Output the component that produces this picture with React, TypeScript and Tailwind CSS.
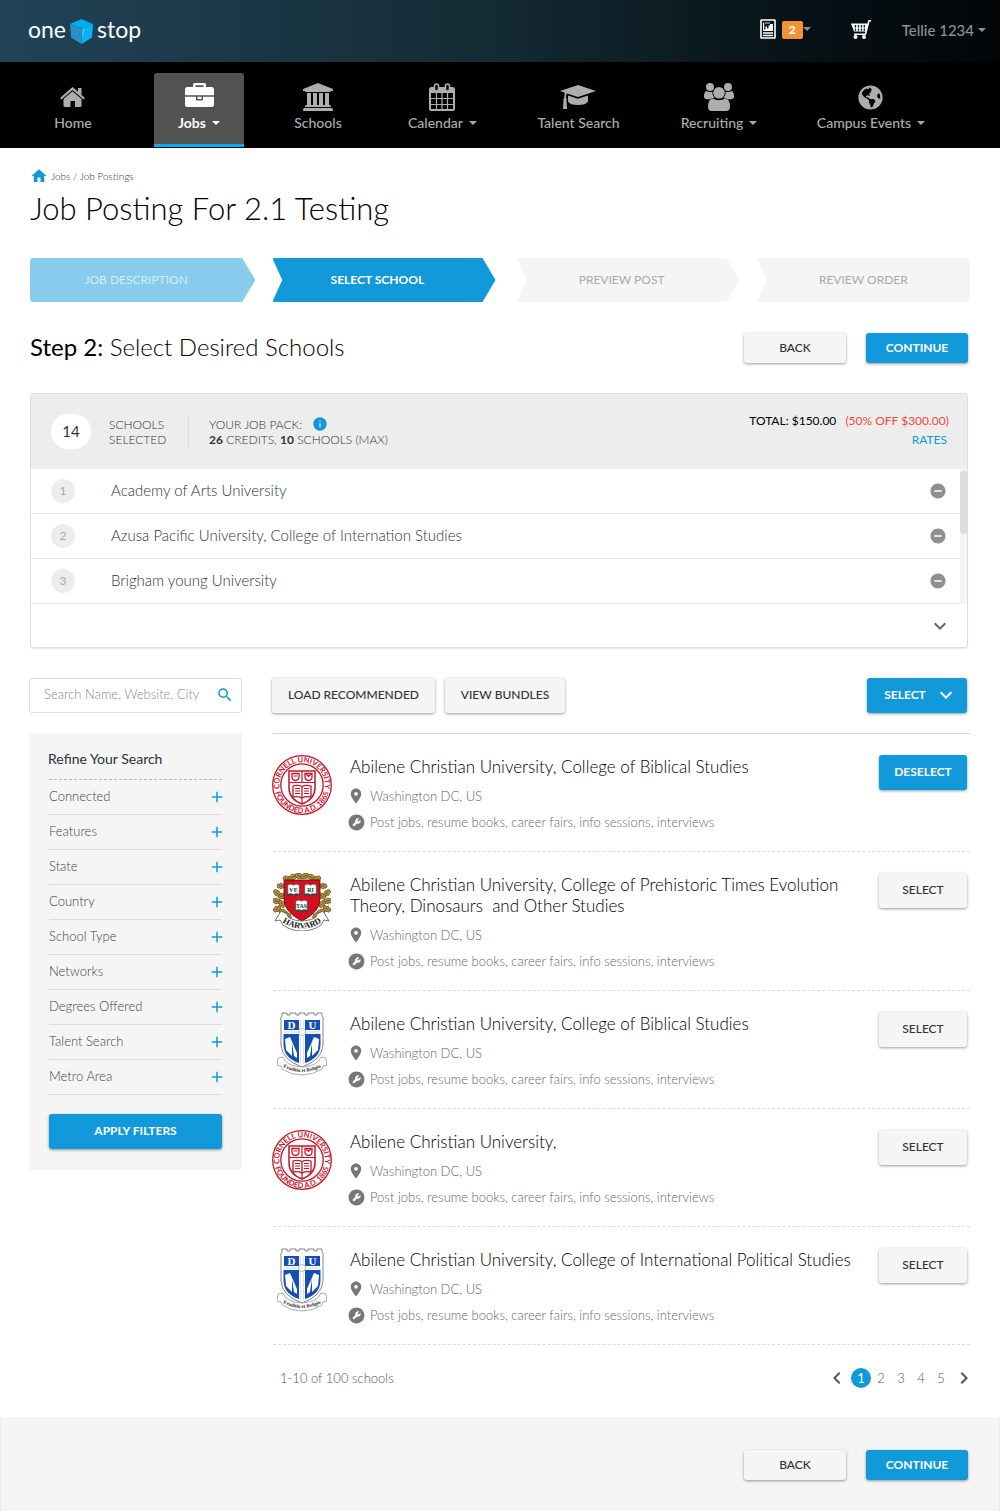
import { useId, type ReactNode } from "react";
import { FaGlobeAmericas } from "react-icons/fa";
import {
  MdAdd,
  MdBuildCircle,
  MdChevronLeft,
  MdChevronRight,
  MdExpandMore,
  MdHome,
  MdInfo,
  MdPlace,
  MdRemoveCircle,
  MdSearch,
} from "react-icons/md";

function Caret() {
  return <span aria-hidden="true" className="inline-block h-0 w-0 border-x-4 border-t-4 border-x-transparent border-t-current" />;
}

/* ---------- drawings ---------- */

function CubeLogo() {
  return (
    <svg viewBox="0 0 23 25" className="h-[25px] w-[23px]" aria-hidden="true">
      <path d="M11.5 0 23 5 11.5 10 0 5Z" fill="#00aeef" />
      <path d="M0 5 11.5 10V25L1 18.500Z" fill="#2d8fc9" />
      <path d="M23 5 11.500 10V25L22 18.500Z" fill="#06b4f5" />
      <path d="M12.500 10.500 15 9.500 12.500 18Z" fill="#4cc6f6" />
    </svg>
  );
}

function HouseIcon() {
  return (
    <svg viewBox="0 0 25 20" className="h-5 w-[25px]" fill="currentColor" aria-hidden="true">
      <path d="M12.500 0 18 4.800V1H21.500V8L25 11 23.600 12.500 12.500 3 1.400 12.500 0 11Z" />
      <path d="M12.500 4.300 21.500 12V18.500Q21.500 20 20 20H15V14H10.500V20H5Q3.500 20 3.500 18.500V12Z" />
    </svg>
  );
}

function BriefcaseIcon() {
  return (
    <svg viewBox="0 0 29 24" className="h-6 w-[29px]" fill="currentColor" aria-hidden="true">
      <path fillRule="evenodd" d="M8 4V1.800Q8 0 9.800 0H19.200Q21 0 21 1.800V4H26.500Q29 4 29 6.500V12.300H0V6.500Q0 4 2.500 4ZM10.500 4H18.500V2.200H10.500Z" />
      <path d="M0 13.700H11V16.200Q11 17.500 12.300 17.500H16.700Q18 17.500 18 16.200V13.700H29V21.500Q29 24 26.500 24H2.500Q0 24 0 21.500ZM12.500 13.700H16.500V16H12.500Z" />
    </svg>
  );
}

function BankIcon() {
  return (
    <svg viewBox="0 0 30 28" className="h-7 w-[30px]" fill="currentColor" aria-hidden="true">
      <path d="M15 0 30 6V8H28Q28 9 27 9H3Q2 9 2 8H0V6Z" />
      <path d="M4 10H8V22H10V10H14V22H16V10H20V22H22V10H26V22H27Q28 22 28 24H2Q2 22 3 22H4Z" />
      <path d="M1 25H29Q30 25 30 28H0Q0 25 1 25Z" />
    </svg>
  );
}

function CalendarIcon() {
  return (
    <svg viewBox="0 0 26 28" className="h-7 w-[26px]" aria-hidden="true">
      <rect x="1" y="5" width="24" height="22" rx="1.500" fill="none" stroke="currentColor" strokeWidth="2" />
      <path d="M1 5H25V10H1Z" fill="currentColor" />
      <path d="M7.500 10V27M13 10V27M18.500 10V27M1 15.500H25M1 21.500H25" stroke="currentColor" strokeWidth="1.200" />
      <rect x="5.500" y="1" width="4" height="7" rx="2" fill="#000" stroke="currentColor" strokeWidth="1.600" />
      <rect x="16.500" y="1" width="4" height="7" rx="2" fill="#000" stroke="currentColor" strokeWidth="1.600" />
    </svg>
  );
}

function CapIcon() {
  return (
    <svg viewBox="0 0 36 24" className="h-6 w-9" fill="currentColor" aria-hidden="true">
      <path d="M18 0 36 6 18 12 7 8.400Q6 9 6 13Q7.200 14 6.500 15.500L7 24H3L3.500 15.500Q3 14 4.200 13Q4.300 9 5 7.700L0 6Z" />
      <path d="M8 10.500 18 13.700 28 10.500V16.500Q26 20 18 20Q10 20 8 16.500Z" />
    </svg>
  );
}

function PeopleIcon() {
  return (
    <svg viewBox="0 0 30 28" className="h-7 w-[30px]" fill="currentColor" aria-hidden="true">
      <circle cx="6" cy="4" r="4" />
      <circle cx="24" cy="4" r="4" />
      <path d="M2.500 8Q4 9.200 6 9Q7.500 9 8.300 8.400Q8 12.500 10.500 14.800Q8 15 6.200 16.300H3Q0 16.300 0 13.500Q0 8.500 2.500 8Z" />
      <path d="M27.500 8Q26 9.200 24 9Q22.500 9 21.700 8.400Q22 12.500 19.500 14.800Q22 15 23.800 16.300H27Q30 16.300 30 13.500Q30 8.500 27.500 8Z" />
      <circle cx="15" cy="9.800" r="5.800" />
      <path d="M9 15.500Q11.500 17.300 15 17.300Q18.500 17.300 21 15.500Q26 16 26 23.500Q26 28 22 28H8Q4 28 4 23.500Q4 16 9 15.500Z" />
    </svg>
  );
}

function ReportIcon() {
  return (
    <svg viewBox="0 0 16 20" className="h-5 w-4" aria-hidden="true">
      <rect x="1" y="1" width="14" height="18" rx=".5" fill="none" stroke="#fff" strokeWidth="1.600" />
      <path d="M3 3.500H4.200V10.500H5.500V7.500H7V9.500H8.500V6.500H10V5H13V12H3Z" fill="#fff" />
      <path d="M5 4H10" stroke="#fff" strokeWidth=".8" />
      <path d="M3 14H13M3 16.500H13" stroke="#fff" strokeWidth="1.300" />
    </svg>
  );
}

function CartIcon() {
  return (
    <svg viewBox="0 0 20 19" className="h-[19px] w-5" fill="none" stroke="#fff" aria-hidden="true">
      <path d="M20 .8H18L14.500 14.300H3" strokeWidth="1.500" />
      <path d="M0 3.500H17L15 11.500H3Z" fill="#fff" stroke="none" />
      <path d="M4.500 5V11M7.500 5V11M10.500 5V11M13.300 5V11" stroke="#04141a" strokeWidth="1.300" strokeDasharray="2.400 1" />
      <circle cx="4.500" cy="17" r="2" fill="#fff" stroke="none" />
      <circle cx="13" cy="17" r="2" fill="#fff" stroke="none" />
    </svg>
  );
}

function CornellSeal() {
  const id = useId();
  return (
    <svg viewBox="0 0 60 60" className="h-[60px] w-[60px]" role="img" aria-label="Cornell University seal">
      <defs>
        <path id={id + "t"} d="M8 36A22.800 22.800 0 1 1 52 36" />
        <path id={id + "b"} d="M2 30A28 28 0 0 0 58 30" />
      </defs>
      <g fill="none" stroke="#c4162a">
        <circle cx="30" cy="30" r="29.300" strokeWidth="1.300" />
        <circle cx="30" cy="30" r="21.200" strokeWidth="1.300" />
        <path d="M17 16H43V33Q43 44 30 49Q17 44 17 33Z" strokeWidth="1.500" />
        <path d="M17 27.500H43M30 16V27.500M30 43V49" strokeWidth="1.200" />
        <path d="M20 18.500H27V22Q27 25 23.500 25.500Q20 25 20 22ZM33 18.500H40V22Q40 25 36.500 25.500Q33 25 33 22Z" strokeWidth="1.300" />
        <path d="M21.500 21H25.500M34 19L36.500 21.500 39 19" strokeWidth="1.200" />
        <path d="M30 31.500Q26 29.500 21 31V42Q26 41 30 43Q34 41 39 42V31Q34 29.500 30 31.500ZM30 31.500V43" strokeWidth="1.300" />
        <path d="M23 33.500H28M23 36H28M23 38.500H28M32 33.500H37M32 36H37M32 38.500H37" strokeWidth="1" />
      </g>
      <g fill="#c4162a" fontFamily="Lato, sans-serif" fontWeight="700" fontSize="7.500">
        <text textAnchor="middle"><textPath href={"#" + id + "t"} startOffset="50%">CORNELL UNIVERSITY</textPath></text>
        <text textAnchor="middle"><textPath href={"#" + id + "b"} startOffset="50%">FOUNDED A.D. 1865</textPath></text>
      </g>
    </svg>
  );
}

const LEAVES: [number, number, number][] = [
  [8, 13, 0], [4, 20, 40], [9, 23, -30], [3, 28, 10], [9, 31, 50], [4, 36, -30], [10, 39, 20], [15, 43, 50],
  [14, 6, 30], [20, 4, -20], [26, 3, 20], [32, 3, -20], [38, 4, 20], [44, 6, -30],
  [50, 13, 0], [54, 20, -40], [49, 23, 30], [55, 28, -10], [49, 31, -50], [54, 36, 30], [48, 39, -20], [43, 43, -50],
];

function OpenBook({ x, y, word }: { x: number; y: number; word: string }) {
  return (
    <g transform={`translate(${x} ${y})`}>
      <path d="M0 .5H13V11.500H0Z" fill="#2f4a35" />
      <path d="M.8 1Q4-.5 6.500 1.300Q9-.5 12.200 1V10Q9 8.800 6.500 10.300Q4 8.800 .8 10Z" fill="#fff" stroke="#555" strokeWidth=".5" />
      <text x="6.500" y="7.500" textAnchor="middle" fontSize="6" fontWeight="700" fontFamily="Liberation Serif, serif" fill="#333">{word}</text>
    </g>
  );
}

function HarvardSeal() {
  const id = useId();
  return (
    <svg viewBox="0 0 58 58" className="h-[58px] w-[58px]" role="img" aria-label="Harvard crest">
      <g>
        {LEAVES.map(([x, y, r]) => (
          <g key={x + "-" + y} transform={`translate(${x} ${y}) rotate(${r})`}>
            <path d="M-4 0Q-3.500-3 -1.500-2Q0-4 1.500-2Q3.500-3 4 0Q3.500 3 1.500 2Q0 4 -1.500 2Q-3.500 3 -4 0Z" fill="#b8943a" stroke="#4a3c18" strokeWidth=".6" />
            <path d="M-2 0H2" stroke="#4a3c18" strokeWidth=".7" />
          </g>
        ))}
      </g>
      <path d="M11 7H47V26Q47 39 29 48Q11 39 11 26Z" fill="#d2101f" stroke="#5c0a10" strokeWidth=".8" />
      <OpenBook x={14} y={11} word="VE" />
      <OpenBook x={31} y={11} word="RI" />
      <OpenBook x={22} y={27} word="TAS" />
      <path d="M8 38 14 41Q14 47 29 48Q44 47 44 41L50 38 56 48 51 47 48 52Q40 58 29 58Q18 58 10 52L7 47 2 48Z" fill="#fff" stroke="#555" strokeWidth=".8" />
      <path id={id + "h"} d="M9 49Q29 62 49 49" fill="none" />
      <text textAnchor="middle" fontFamily="Liberation Serif, serif" fontWeight="700" fontSize="8.500" fill="#222">
        <textPath href={"#" + id + "h"} startOffset="50%">HARVARD</textPath>
      </text>
    </svg>
  );
}

function DukeCrest() {
  const id = useId();
  return (
    <svg viewBox="0 0 50 64" className="h-16 w-[50px]" role="img" aria-label="Duke University crest">
      <path d="M5 1H10V3H13V1H19V3H22V1H28V3H31V1H37V3H40V1H45V4Q47 5 46 9V33Q45 48 25 55Q5 48 4 33V9Q3 5 5 4Z" fill="#fff" stroke="#777" strokeWidth=".9" />
      <path d="M7 8H22V18H7ZM28 8H43V18H28Z" fill="#1450b4" />
      <path d="M6.500 22H22V51Q7 46 6.500 33ZM28 22H43.500V33Q43 46 28 51Z" fill="#1450b4" />
      <path d="M8 27 13 25 20 41V46L17 44 15 31V44L9 38ZM42 27 37 25 30 41V46L33 44 35 31V44L41 38Z" fill="#fff" />
      <path d="M23.500 9V52M26.500 9V52" stroke="#ccc" strokeWidth=".6" />
      <path d="M7 20H43" stroke="#bbb" strokeWidth=".6" />
      <circle cx="25" cy="20" r="3.500" fill="#fff" stroke="#aaa" strokeWidth=".8" />
      <g fontFamily="Liberation Serif, serif" fontWeight="700" fontSize="11" fill="#fff" textAnchor="middle">
        <text x="14.500" y="17">D</text>
        <text x="35.500" y="17">U</text>
      </g>
      <path d="M1 46 6 45Q9 54 25 55Q41 54 44 45L49 46 50 53 46 54 45 57Q36 63 25 63Q14 63 5 57L4 54 0 53Z" fill="#fff" stroke="#999" strokeWidth=".8" />
      <path id={id + "d"} d="M5 54.500Q25 65.500 45 54.500" fill="none" />
      <text textAnchor="middle" fontFamily="Liberation Serif, serif" fontWeight="700" fontSize="5" fill="#222">
        <textPath href={"#" + id + "d"} startOffset="50%">Eruditio et Religio</textPath>
      </text>
    </svg>
  );
}

/* ---------- shared controls ---------- */

const blue = "bg-[#1199da] text-white shadow-[0_1px_3px_rgba(0,0,0,0.4)]";
const pale = "bg-[#f5f5f5] text-[#333] shadow-[0_1px_3px_rgba(0,0,0,0.4)]";

function Button({ primary, className, children }: { primary?: boolean; className: string; children: ReactNode }) {
  return (
    <button type="button" className={`flex shrink-0 items-center justify-center rounded-[3px] pb-px text-xs ${primary ? `${blue} font-bold` : `${pale} font-medium`} ${className}`}>
      {children}
    </button>
  );
}

function BackContinue() {
  return (
    <div className="flex gap-5">
      <Button className="h-[30px] w-[102px]">BACK</Button>
      <Button primary className="h-[30px] w-[102px]">CONTINUE</Button>
    </div>
  );
}

/* ---------- data ---------- */

const NAV: { label: string; icon: ReactNode; menu?: boolean; active?: boolean }[] = [
  { label: "Home", icon: <HouseIcon /> },
  { label: "Jobs", icon: <BriefcaseIcon />, menu: true, active: true },
  { label: "Schools", icon: <BankIcon /> },
  { label: "Calendar", icon: <CalendarIcon />, menu: true },
  { label: "Talent Search", icon: <CapIcon /> },
  { label: "Recruiting", icon: <PeopleIcon />, menu: true },
  { label: "Campus Events", icon: <FaGlobeAmericas className="h-[25px] w-[25px]" />, menu: true },
];

const NOTCHED = "[clip-path:polygon(0_0,calc(100%-13px)_0,100%_50%,calc(100%-13px)_100%,0_100%,10px_50%)] pr-[13px]";

const STEPS = [
  { label: "JOB DESCRIPTION", style: "bg-[#87cced] text-[#d3edf9] pr-[13px] [clip-path:polygon(0_0,calc(100%-13px)_0,100%_50%,calc(100%-13px)_100%,0_100%)]" },
  { label: "SELECT SCHOOL", style: `bg-[#1199da] text-white font-bold mr-1 ${NOTCHED}` },
  { label: "PREVIEW POST", style: `bg-[#f5f5f5] text-[#aaa] ${NOTCHED}` },
  { label: "REVIEW ORDER", style: "bg-[#f5f5f5] text-[#aaa] [clip-path:polygon(0_0,100%_0,100%_100%,0_100%,10px_50%)]" },
];

const SELECTED = ["Academy of Arts University", "Azusa Pacific University, College of Internation Studies", "Brigham young University"];

const FILTERS = ["Connected", "Features", "State", "Country", "School Type", "Networks", "Degrees Offered", "Talent Search", "Metro Area"];

const SCHOOLS: { name: string; seal: ReactNode; picked?: boolean }[] = [
  { name: "Abilene Christian University, College of Biblical Studies", seal: <CornellSeal />, picked: true },
  { name: "Abilene Christian University, College of Prehistoric Times Evolution Theory, Dinosaurs \u00a0and Other Studies", seal: <HarvardSeal /> },
  { name: "Abilene Christian University, College of Biblical Studies", seal: <DukeCrest /> },
  { name: "Abilene Christian University,", seal: <CornellSeal /> },
  { name: "Abilene Christian University, College of International Political Studies", seal: <DukeCrest /> },
];

/* ---------- page ---------- */

function TopBar() {
  return (
    <header className="flex h-[62px] items-center justify-between bg-linear-to-r from-[#214458] via-[#142a33] to-[#020507] pr-[14px] pl-7">
      <a href="#" aria-label="one stop" className="flex items-center gap-1 text-[23px] leading-6 text-white">
        <span className="pb-1">one</span>
        <CubeLogo />
        <span className="pb-1">stop</span>
      </a>
      <div className="flex items-center pb-1 text-[#8d9194]">
        <button type="button" aria-label="Reports" className="flex items-center">
          <ReportIcon />
          <span className="mt-0.5 ml-1.5 flex h-[18px] w-[21px] items-center justify-center rounded-[2px] bg-[#f29435] text-xs font-black text-white">2</span>
          <Caret />
        </button>
        <button type="button" aria-label="Cart" className="ml-10"><CartIcon /></button>
        <button type="button" className="ml-[31px] flex items-center gap-1 pt-0.5 text-[15px] leading-5 font-medium">
          Tellie 1234 <Caret />
        </button>
      </div>
    </header>
  );
}

function MainNav() {
  return (
    <nav className="h-[86px] bg-black pt-[11px] pr-[50px] pl-[10px]">
      <ul className="grid grid-cols-[126fr_126fr_112fr_137fr_135fr_146fr_158fr]">
        {NAV.map((n) => (
          <li key={n.label} className="flex justify-center">
            <a
              href="#"
              className={`flex h-[74px] flex-col items-center border-b-[3px] pt-[10px] text-sm leading-5 whitespace-nowrap ${
                n.active ? "w-[90px] rounded-t-[3px] border-[#00aeef] bg-[#525252] font-bold text-white" : "border-transparent font-medium text-[#adadad]"
              }`}
            >
              <span className={`flex h-7 ${n.active ? "items-start" : "items-center"}`}>{n.icon}</span>
              <span className="mt-0.5 flex items-center gap-1.5">
                {n.label} {n.menu && <Caret />}
              </span>
            </a>
          </li>
        ))}
      </ul>
    </nav>
  );
}

function SelectedPanel() {
  return (
    <section className="mt-[30px] mr-0.5 rounded-[3px] border border-[#ddd] bg-white shadow-[0_1px_1px_rgba(0,0,0,0.08)]">
      <div className="flex h-[75px] items-center bg-[#ededed] pr-[18px] pl-5 text-xs leading-[15px] text-[#333]">
        <span className="flex h-[35px] w-10 items-center justify-center rounded-[17px] bg-white text-[15px]">14</span>
        <p className="ml-[18px] w-20 border-r border-[#ddd] font-light">SCHOOLS<br />SELECTED</p>
        <div className="ml-5 font-light">
          <p className="flex items-center gap-2.5">YOUR JOB PACK: <MdInfo className="-my-1 h-4 w-4 text-[#1199da]" /></p>
          <p><b className="font-bold">26</b> CREDITS, <b className="font-bold">10</b> SCHOOLS (MAX)</p>
        </div>
        <div className="ml-auto pb-1 text-right leading-[19px]">
          <p className="text-black">TOTAL: $150.00 <span className="ml-1.5 text-[#ee4a3c]">(50% OFF $300.00)</span></p>
          <a href="#" className="pr-0.5 text-[#1199da]">RATES</a>
        </div>
      </div>
      <div className="flex">
        <ol className="grow">
          {SELECTED.map((s, i) => (
            <li key={s} className="flex h-[45px] items-center border-b border-[#eaeaea] pr-[13px] pl-5">
              <span className="flex h-6 w-6 items-center justify-center rounded-full bg-[#ededed] text-xs text-[#aaa]">{i + 1}</span>
              <span className="ml-9 pb-0.5 text-[15px] leading-5 font-light text-[#333]">{s}</span>
              <button type="button" aria-label={`Remove ${s}`} className="ml-auto text-[#8f8f8f]"><MdRemoveCircle className="h-[18px] w-[18px]" /></button>
            </li>
          ))}
        </ol>
        <div className="w-[7px] bg-[#f5f5f5] pt-0.5"><div className="h-[63px] rounded-[3px] bg-[#dcdcdc]" /></div>
      </div>
      <div className="flex h-[43px] items-center justify-end pr-[15px]">
        <button type="button" aria-label="Show all selected schools" className="text-[#666]"><MdExpandMore className="h-6 w-6" /></button>
      </div>
    </section>
  );
}

function Sidebar() {
  return (
    <aside className="-ml-px w-[213px] shrink-0">
      <form className="flex h-[35px] items-center rounded-[3px] border border-[#ddd] pr-[7px] pb-px pl-[14px]">
        <input type="text" aria-label="Search schools" placeholder="Search Name, Website, City" className="min-w-0 grow text-[13px] font-light outline-none placeholder:text-[#8a8a8a]" />
        <button type="button" aria-label="Search" className="text-[#1199da]"><MdSearch className="h-[18px] w-[18px]" /></button>
      </form>
      <div className="mt-5 rounded-[3px] bg-[#f5f5f5] px-5 pt-4 pb-[21px]">
        <h3 className="-ml-px text-sm leading-5 text-[#263238]">Refine Your Search</h3>
        <ul className="mt-[10px] border-t border-dashed border-[#b5b5b5]">
          {FILTERS.map((f) => (
            <li key={f} className="border-b border-[#dcdcdc]">
              <button type="button" className="flex h-[34px] w-full items-center justify-between text-[13px] font-light text-[#444]">
                {f} <MdAdd className="-mr-1 h-[18px] w-[18px] text-[#1199da]" />
              </button>
            </li>
          ))}
        </ul>
        <Button primary className="mt-[19px] h-[35px] w-full">APPLY FILTERS</Button>
      </div>
    </aside>
  );
}

function Results() {
  return (
    <section className="min-w-0 grow">
      <div className="-ml-px flex items-start gap-[10px] pr-[3px]">
        <Button className="h-[35px] w-[163px]">LOAD RECOMMENDED</Button>
        <Button className="h-[35px] w-[120px]">VIEW BUNDLES</Button>
        <Button primary className="ml-auto h-[35px] w-[100px] gap-2 pl-2">SELECT <MdExpandMore className="h-6 w-6" /></Button>
      </div>
      <ul className="mt-5 border-t border-[#d8d8d8]">
        {SCHOOLS.map((s, i) => (
          <li key={i} className="flex border-b border-dashed border-[#dcdcdc] pr-[3px] pb-[19px]">
            <div className="-ml-px flex w-[60px] shrink-0 justify-center pt-[21px]">{s.seal}</div>
            <div className="ml-[18px] min-w-0 grow pt-[22px] font-light text-[#666]">
              <h3 className="max-w-[505px] text-[17px] leading-[21px] text-black">{s.name}</h3>
              <p className="mt-[9px] flex items-center text-[13px] leading-5"><MdPlace className="mr-[5px] -ml-[3px] h-[18px] w-[18px] text-[#777]" />Washington DC, US</p>
              <p className="mt-1.5 flex items-center text-[13px] leading-5"><MdBuildCircle className="mr-1 -ml-[3px] h-[19px] w-[19px] -scale-x-100 text-[#777]" />Post jobs, resume books, career fairs, info sessions, interviews</p>
            </div>
            <Button primary={s.picked} className="mt-[21px] h-[35px] w-[88px]">{s.picked ? "DESELECT" : "SELECT"}</Button>
          </li>
        ))}
      </ul>
      <div className="mt-[21px] flex items-center justify-between pl-[7px] text-[13px] leading-5 font-light text-[#555]">
        <p>1-10 of 100 schools</p>
        <nav aria-label="Pages" className="flex items-center">
          <a href="#" aria-label="Previous page" className="mr-0.5"><MdChevronLeft className="h-6 w-6" /></a>
          {[1, 2, 3, 4, 5].map((n) => (
            <a key={n} href="#" className={`flex h-5 w-5 items-center justify-center rounded-full ${n === 1 ? "bg-[#1199da] font-normal text-white" : ""}`}>{n}</a>
          ))}
          <a href="#" aria-label="Next page" className="-mr-1.5 ml-px"><MdChevronRight className="h-6 w-6" /></a>
        </nav>
      </div>
    </section>
  );
}

export default function App() {
  return (
    <div className="min-h-screen bg-white font-[Lato,sans-serif] text-black">
      <TopBar />
      <MainNav />
      <main className="px-[30px]">
        <div className="flex items-center gap-[3px] pt-[19px] text-[10px] leading-4 font-light text-[#333]">
          <MdHome className="h-[18px] w-[18px] text-[#1199da]" />
          <a href="#">Jobs / Job Postings</a>
        </div>
        <h1 className="mt-[3px] text-[31px] leading-10 font-light">Job Posting For 2.1 Testing</h1>
        <ol className="mt-[30px] grid grid-cols-[225fr_227fr_223fr_213fr] gap-[17px]">
          {STEPS.map((s) => (
            <li key={s.label} className={`flex h-11 items-center justify-center rounded-[3px] text-xs ${s.style}`}>{s.label}</li>
          ))}
        </ol>
        <div className="mt-[31px] flex items-start justify-between pr-0.5">
          <h2 className="text-2xl leading-7 font-light"><span className="font-normal">Step 2:</span> Select Desired Schools</h2>
          <BackContinue />
        </div>
        <SelectedPanel />
        <div className="mt-[30px] flex gap-[31px]">
          <Sidebar />
          <Results />
        </div>
      </main>
      <footer className="mt-[28px] flex h-[94px] items-center justify-end border border-[#ebebeb] bg-[#f5f5f5] pr-[31px]">
        <BackContinue />
      </footer>
    </div>
  );
}
